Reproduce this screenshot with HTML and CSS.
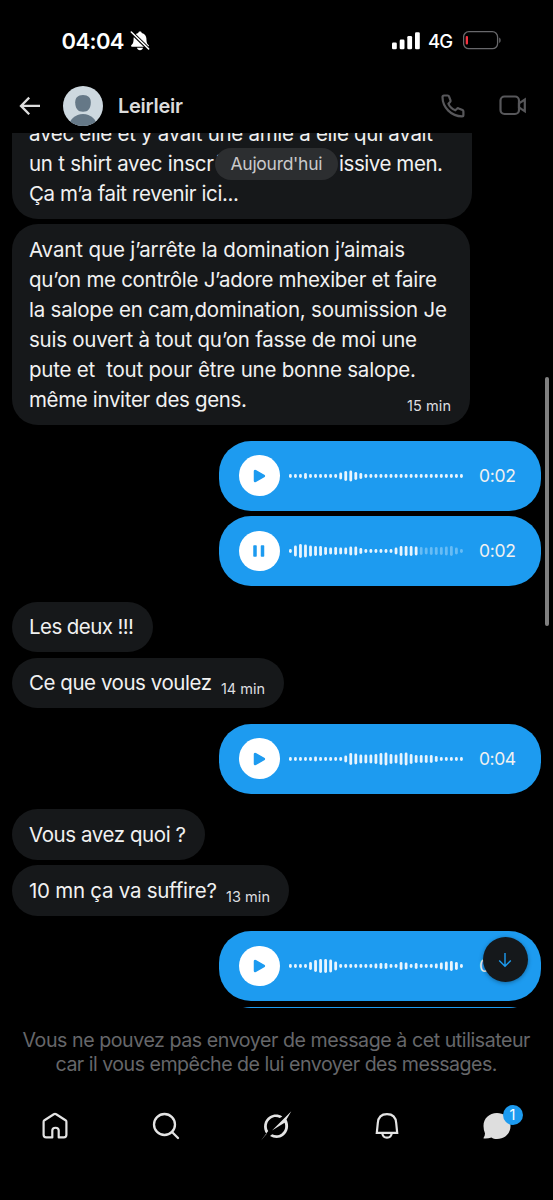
FILE: index.html
```html
<!DOCTYPE html>
<html lang="fr">
<head>
<meta charset="utf-8">
<title>Leirleir</title>
<link rel="stylesheet" href="styles.css">
</head>
<body>
<div class="phone">
  <div class="status">
    <span class="clock"><span data-w="63">04:04</span></span>
    <svg class="mute" width="20" height="20" viewBox="0 0 20 20"><path d="M10 .6c.9 0 1.600.5 1.700 1.300 2.900.6 4.600 2.800 4.700 5.700.1 4 .6 5.200 2.100 6.500.8.7.5 1.700-.5 1.700H2c-1 0-1.300-1-.5-1.700C3 12.800 3.500 11.600 3.600 7.600 3.700 4.700 5.400 2.500 8.300 1.900 8.400 1.100 9.100.6 10 .6zM7 16.700h6c-.2 1.500-1.500 2.500-3 2.500s-2.800-1-3-2.500z" fill="#fff"/><path d="M1 .9L18.600 18" stroke="#000" stroke-width="3.600"/><path d="M1.300 1L18.600 17.900" stroke="#fff" stroke-width="1.500" stroke-linecap="round"/></svg>
    <svg class="signal" width="28" height="18" viewBox="0 0 28 18" fill="#fff"><rect x="0" y="10.500" width="4.800" height="6.700" rx="1.300"/><rect x="7.700" y="7.600" width="4.800" height="9.600" rx="1.300"/><rect x="15.300" y="4" width="4.800" height="13.200" rx="1.300"/><rect x="23" y="0.200" width="4.800" height="17" rx="1.300"/></svg>
    <span class="net"><span data-w="25">4G</span></span>
    <svg class="battery" width="39" height="19" viewBox="0 0 39 19"><rect x=".6" y=".7" width="34" height="17" rx="5.200" fill="none" stroke="#68686b" stroke-width="1.300"/><path d="M36.200 6.600c1.900.6 1.900 4.900 0 5.500z" fill="#68686b"/><rect x="2.700" y="5" width="2.300" height="8.500" rx="1" fill="#f5333f"/></svg>
  </div>
  <header class="head">
    <svg class="back" width="22" height="20" viewBox="0 0 22 20" fill="none" stroke="#dcdcdc" stroke-width="2.300"><path d="M10.200 1.600L2 9.900l8.200 8.300M2 9.900h19"/></svg>
    <svg class="avatar" width="40" height="40" viewBox="0 0 40 40"><defs><clipPath id="disc"><circle cx="20" cy="20" r="20"/></clipPath></defs><g clip-path="url(#disc)"><rect width="40" height="40" fill="#cdd8df"/><path d="M20 9c5.300 0 7.800 3 7.800 7.300 0 6.200-2.600 9.500-7.800 9.500s-7.800-3.300-7.800-9.500C12.200 12 14.700 9 20 9z" fill="#657887"/><ellipse cx="20" cy="41" rx="14" ry="13" fill="#657887"/></g></svg>
    <h1 class="name"><span data-w="65">Leirleir</span></h1>
    <svg class="call" width="24" height="24" viewBox="0 0 24 24" fill="none" stroke="#57575a" stroke-width="2.200" stroke-linejoin="round"><path d="M3 1.500H6.600C7.300 1.500 7.800 1.800 8 2.400L9.500 6.300C9.700 7 9.600 7.500 9.100 8L7.400 9.700C8.500 12.600 11 15 14.300 16.300L16 14.700C16.500 14.200 17.100 14.100 17.700 14.400L21.500 16C22.100 16.300 22.400 16.700 22.400 17.400V21c0 .8-.6 1.400-1.400 1.400C10.500 22.400 1.500 13.500 1.500 3c0-.9.600-1.500 1.500-1.500z"/></svg>
    <svg class="video" width="28" height="21" viewBox="0 0 28 21" fill="none" stroke="#57575a" stroke-width="2.200"><rect x="1.500" y="1.500" width="18.500" height="17.500" rx="4"/><path d="M20 8.300L25.800 4.500V16.300L20 12.500z"/></svg>
  </header>
  <main class="chat">
    <div class="bubble first">
      <p><span data-w="404">avec elle et y avait une amie à elle qui avait</span></p>
      <p class="split"><span data-w="185">un t shirt avec inscr</span><span data-w="121">iption subm</span><span data-w="104">issive men.</span></p>
      <p><span data-w="210">Ça m’a fait revenir ici...</span></p>
    </div>
    <div class="bubble long">
      <p><span data-w="376">Avant que j’arrête la domination j’aimais</span></p>
      <p><span data-w="408">qu’on me contrôle J’adore mhexiber et faire</span></p>
      <p><span data-w="418">la salope en cam,domination, soumission Je</span></p>
      <p><span data-w="388">suis ouvert à tout qu’on fasse de moi une</span></p>
      <p><span data-w="387">pute et  tout pour être une bonne salope.</span></p>
      <p class="last"><span data-w="218">même inviter des gens.</span><time><span data-w="44">15 min</span></time></p>
    </div>
    <div class="voice gap"><i class="btn play"></i><svg class="wave" data-h="4 4 4 6 4 4 4 4 4 4 7 10 11 8 6 4 4 4 4 4 4 4 4 4 4 4 4 4 4 4 4 4 4 4 4"></svg><b><span data-w="37">0:02</span></b></div>
    <div class="voice"><i class="btn pause"></i><svg class="wave" data-played="26" data-h="4 11 14 13 11 10 10 8 7 8 7 7 9 9 6 4 4 4 4 4 4 7 10 10 10 9 8 7 8 8 8 9 10 7 4"></svg><b><span data-w="37">0:02</span></b></div>
    <div class="bubble gap"><p><span data-w="105">Les deux !!!</span></p></div>
    <div class="bubble"><p><span data-w="183">Ce que vous voulez</span><time><span data-w="44">14 min</span></time></p></div>
    <div class="voice gap"><i class="btn play"></i><svg class="wave" data-h="4 4 4 4 4 5 4 4 4 4 4 7 12 11 9 9 9 10 12 13 10 9 12 13 10 8 8 8 8 6 4 4 4 4 4"></svg><b><span data-w="37">0:04</span></b></div>
    <div class="bubble gap"><p><span data-w="157">Vous avez quoi ?</span></p></div>
    <div class="bubble"><p><span data-w="188">10 mn ça va suffire?</span><time><span data-w="44">13 min</span></time></p></div>
    <div class="voice gap"><i class="btn play"></i><svg class="wave" data-h="4 4 4 4 8 12 14 14 13 9 4 4 4 4 4 4 4 5 6 6 4 4 8 7 4 6 4 4 4 5 7 9 10 8 4"></svg><b><span data-w="37">0:03</span></b></div>
    <div class="voice"></div>
  </main>
  <div class="chip"><span data-w="92">Aujourd'hui</span></div>
  <div class="jump"><svg width="14" height="16" viewBox="0 0 14 16" fill="none" stroke="#1d9bf0" stroke-width="1.400"><path d="M7 1v13M1.200 8.500L7 14.200l5.800-5.700"/></svg></div>
  <div class="scrollbar"></div>
  <footer class="notice">
    <p><span data-w="508">Vous ne pouvez pas envoyer de message à cet utilisateur</span></p>
    <p><span data-w="442">car il vous empêche de lui envoyer des messages.</span></p>
  </footer>
  <nav class="tabs">
    <span><svg width="28" height="28" viewBox="0 0 28 28" fill="none" stroke="#e4e4e4" stroke-width="2.200" stroke-linejoin="round"><path d="M2.600 9.800Q2.600 8.800 3.500 8.200L12.800 2.300Q14 1.600 15.200 2.300L24.500 8.200Q25.400 8.800 25.400 9.800V22.800Q25.400 25.400 22.800 25.400H17.700V18.500C17.700 14.800 11.300 14.800 11.300 18.500V25.400H5.200Q2.600 25.400 2.600 22.800z"/></svg></span>
    <span><svg width="28" height="28" viewBox="0 0 28 28" fill="none" stroke="#e4e4e4" stroke-width="2.300" stroke-linecap="round"><circle cx="12.500" cy="12.500" r="10.500"/><path d="M20 20l6 6"/></svg></span>
    <span><svg width="32" height="30" viewBox="0 0 32 30"><path d="M6.500 23C2.200 17.200 3.800 8.700 9.800 5.300 13.900 2.900 18.600 3.100 22.300 5.500L19.800 7C16.600 5.500 13.300 5.800 10.700 7.700 6.700 10.600 5.700 15.900 8.200 20L1 29.500z" fill="#e4e4e4"/><path d="M12 19.500L31.300.3 26.500 8.500C29.500 14.500 28.300 21 23.300 24.800 19.300 27.700 14.200 27.700 10 25L12.200 23.300C15.300 24.800 18.900 24.500 21.700 22.400 25 19.900 26 16 24.600 11.800z" fill="#e4e4e4"/></svg></span>
    <span><svg width="26" height="28" viewBox="0 0 26 28" fill="none" stroke="#e4e4e4" stroke-width="2.200"><path d="M3.800 11C4.200 5.400 7.700 2.100 13 2.100S21.800 5.400 22.200 11L23.200 20.800H2.800zM8.200 21c.3 2.800 2.200 4.600 4.800 4.600s4.500-1.800 4.800-4.600"/></svg></span>
    <span class="dm"><svg width="28" height="28" viewBox="0 0 28 28"><path d="M14 1C21.800 1 27.500 6.500 27.500 14S21.800 27 14 27C11.700 27 10 26.500 8.500 25.500 6 26.500 3 26.800.7 26.500L.5 26C1.500 24.500 2 23 2 21.500 1 19 .5 16.500.5 14 .5 6.500 6.200 1 14 1z" fill="#dedede"/></svg><em>1</em></span>
  </nav>
</div>
<script src="chat.js"></script>
</body>
</html>
```
FILE: styles.css
```css
* { box-sizing: border-box; }
body { margin: 0; background: #000; color: #f1f1f1; font-family: Inter, "Liberation Sans", sans-serif; }
p, h1 { margin: 0; font-weight: 400; }
[data-w] { display: inline-block; white-space: pre; }
.phone { position: relative; width: 553px; height: 1200px; overflow: hidden; background: #000; display: flex; flex-direction: column; }

.status { height: 78px; flex: none; display: flex; align-items: flex-start; padding: 31px 51px 0 61.500px; color: #fff; }
.clock { font-size: 22px; line-height: 20px; font-weight: 600; width: 68px; }
.signal { margin: 1px 0 0 242.500px; }
.net { font-size: 18.500px; line-height: 20px; font-weight: 500; width: 34.500px; padding-left: 8px; flex: none; }
.battery { margin-left: auto; }

.head { height: 55px; flex: none; display: flex; align-items: center; padding: 0 26px 0 19px; }
.avatar { margin-left: 22px; }
.name { margin-left: 15px; font-size: 20px; line-height: 30px; font-weight: 600; color: #dcdcdc; flex: 1; }
.video { margin-left: 34px; }

.chat { height: 875px; flex: none; overflow: hidden; display: flex; flex-direction: column; align-items: flex-start; gap: 5.500px; padding: 0 12px 0 11.500px; }
.bubble { flex: none; background: #16181a; border-radius: 26px; padding: 10.500px 19px 10px 17.500px; font-size: 20.500px; line-height: 30px; }
.bubble p { display: flex; height: 30px; }
.bubble.first { width: 460.500px; margin-top: -44.500px; padding-top: 30px; }
.bubble.long { width: 458.500px; padding-bottom: 10.500px; }
.split { gap: 2px; }
.bubble time { margin: 6px 0 0 9px; font-size: 14.500px; color: #dedfe0; }
.last { justify-content: space-between; }
.gap { margin-top: 10px; }

.voice { flex: none; align-self: flex-end; width: 322px; height: 70px; border-radius: 32px; background: #1d9bf0; display: flex; align-items: center; padding: 0 25px 0 20px; }
.btn { width: 40.500px; height: 40.500px; border-radius: 50%; background: #fff; display: flex; align-items: center; justify-content: center; flex: none; }
.wave { width: 174px; height: 16px; margin-left: 9px; fill: #e9f5fe; }
.wave .rest { fill: #67bcf5; }
.voice b { margin-left: auto; font-weight: 400; font-size: 17.500px; line-height: 22px; }

.chip { position: absolute; left: 215px; top: 148px; width: 123px; height: 32px; border-radius: 16px; background: #2c2e30; color: #c9cacb; font-size: 17.500px; line-height: 31px; text-align: center; }
.jump { position: absolute; left: 482.500px; top: 937px; width: 45px; height: 45px; border-radius: 50%; background: #15181b; box-shadow: 0 1px 4px rgba(0,0,0,.35); display: flex; align-items: center; justify-content: center; }
.scrollbar { position: absolute; left: 545px; top: 377px; width: 4px; height: 249px; border-radius: 2px; background: #808080; }

.notice { flex: none; margin-top: 20px; text-align: center; font-size: 19.600px; line-height: 24.200px; color: #66676a; }

.tabs { display: grid; grid-template-columns: repeat(5, 110.500px); margin-top: 32px; height: 36px; }
.tabs span { display: flex; align-items: center; justify-content: center; position: relative; }
.tabs em { position: absolute; left: 60.500px; top: -3px; width: 20px; height: 20px; border-radius: 50%; background: #1d9bf0; color: #fff; font: 400 14.500px/20px Inter, sans-serif; text-align: center; }
```
FILE: chat.js
```js
const ns = "http://www.w3.org/2000/svg";

// Track each run of text to its set width
document.querySelectorAll("[data-w]").forEach(el => {
  const n = el.textContent.length;
  const spacing = (Number(el.dataset.w) - el.getBoundingClientRect().width) / (n - 1);
  el.style.letterSpacing = spacing + "px";
  el.style.marginRight = -spacing + "px";
});

// Waveform bars
document.querySelectorAll(".wave").forEach(wave => {
  const played = Number(wave.dataset.played || Infinity);
  wave.dataset.h.split(" ").map(Number).forEach((h, i) => {
    const bar = document.createElementNS(ns, "rect");
    bar.setAttribute("x", i * 5.03);
    bar.setAttribute("y", 8 - h / 2);
    bar.setAttribute("width", 2.8);
    bar.setAttribute("height", h);
    bar.setAttribute("rx", 1.4);
    if (i >= played) bar.setAttribute("class", "rest");
    wave.append(bar);
  });
});

// Play and pause glyphs
const glyphs = {
  play: "M2.500 2.300v9.400q0 1.200 1.100.7l8.300-4.700q1-.7 0-1.400L3.600 1.600Q2.500 1.100 2.500 2.300z",
  pause: "M2 2h2v10H2zM9.500 2h2v10h-2z"
};
document.querySelectorAll(".btn").forEach(btn => {
  const svg = document.createElementNS(ns, "svg");
  svg.setAttribute("width", 14);
  svg.setAttribute("height", 14);
  svg.setAttribute("viewBox", "0 0 14 14");
  const path = document.createElementNS(ns, "path");
  path.setAttribute("d", glyphs[btn.classList.contains("pause") ? "pause" : "play"]);
  path.setAttribute("fill", "#1d9bf0");
  path.setAttribute("stroke", "#1d9bf0");
  path.setAttribute("stroke-width", 1.5);
  path.setAttribute("stroke-linejoin", "round");
  svg.append(path);
  btn.append(svg);
});
```
